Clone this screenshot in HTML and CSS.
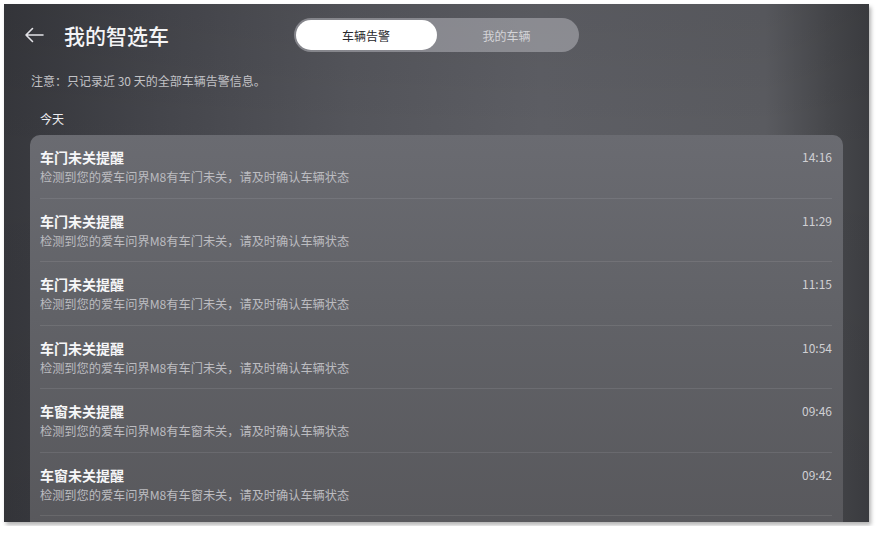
FILE: index.html
```html
<!DOCTYPE html>
<html lang="zh-CN">
<head>
    <meta charset="UTF-8">
    <meta name="viewport" content="width=device-width, initial-scale=1.0">
    <title>我的智选车</title>
    <link rel="stylesheet" href="styles.css">
</head>
<body>

<div class="screen">
    <div class="header">
        <div class="header-left">
            <svg class="back-icon" width="20" height="16" viewBox="0 0 20 16">
                <path d="M19 8H2M8.5 1.5L2 8l6.5 6.5" fill="none" stroke="#e2e2e6" stroke-width="1.6" stroke-linecap="round" stroke-linejoin="round"/>
            </svg>
            <h1 class="title">我的智选车</h1>
        </div>
        <div class="tabs">
            <div class="tab active">车辆告警</div>
            <div class="tab">我的车辆</div>
        </div>
        <div></div>
    </div>

    <p class="notice">注意：只记录近 30 天的全部车辆告警信息。</p>
    <p class="day">今天</p>

    <div class="card" id="alert-list">
        <!-- 告警列表由下方脚本生成 -->
    </div>
</div>

<script>
    const alerts = [
        { title: '车门未关提醒', part: '车门', time: '14:16' },
        { title: '车门未关提醒', part: '车门', time: '11:29' },
        { title: '车门未关提醒', part: '车门', time: '11:15' },
        { title: '车门未关提醒', part: '车门', time: '10:54' },
        { title: '车窗未关提醒', part: '车窗', time: '09:46' },
        { title: '车窗未关提醒', part: '车窗', time: '09:42' }
    ];

    const list = document.getElementById('alert-list');
    for (const item of alerts) {
        const row = document.createElement('div');
        row.className = 'alert-row';

        const text = document.createElement('div');
        text.className = 'alert-text';

        const title = document.createElement('div');
        title.className = 'alert-title';
        title.innerText = item.title;

        const desc = document.createElement('div');
        desc.className = 'alert-desc';
        desc.innerText = `检测到您的爱车问界M8有${item.part}未关，请及时确认车辆状态`;

        const time = document.createElement('div');
        time.className = 'alert-time';
        time.innerText = item.time;

        text.appendChild(title);
        text.appendChild(desc);
        row.appendChild(text);
        row.appendChild(time);
        list.appendChild(row);
    }
</script>

</body>
</html>
```

FILE: styles.css
```css
body {
    margin: 0;
    padding: 4px;
    background-color: #ffffff;
    font-family: "Noto Sans CJK SC", "Noto Sans", sans-serif;
}
.screen {
    width: 865px;
    height: 518px;
    overflow: hidden;
    background:
        linear-gradient(180deg, rgba(0, 0, 0, 0.06) 0%, rgba(0, 0, 0, 0) 30%, rgba(0, 0, 0, 0.05) 100%),
        linear-gradient(90deg, #36373c 0%, #45464c 18%, #55565c 40%, #5e5f65 62%, #5b5c61 88%, #48494d 95%, #3d3e42 100%);
    box-shadow: 2px 3px 4px rgba(0, 0, 0, 0.3);
}
.header {
    display: grid;
    grid-template-columns: 1fr auto 1fr;
    align-items: center;
    padding-top: 14px;
    height: 34px;
}
.header-left {
    display: flex;
    align-items: center;
    padding-left: 20px;
}
.back-icon {
    display: block;
}
.title {
    margin: 0 0 0 20px;
    font-size: 21px;
    font-weight: 500;
    color: #f4f4f6;
    line-height: 30px;
}
.tabs {
    display: flex;
    width: 285px;
    height: 34px;
    padding: 2px;
    box-sizing: border-box;
    border-radius: 17px;
    background-color: rgba(200, 200, 206, 0.45);
    margin-left: -1px;
}
.tab {
    flex: 1;
    display: flex;
    align-items: center;
    justify-content: center;
    border-radius: 15px;
    font-size: 12px;
    color: #d4d4d8;
}
.tab.active {
    flex: 0 0 141px;
    background-color: #ffffff;
    color: #26262a;
}
.notice {
    margin: 20px 0 0 27px;
    font-size: 12px;
    line-height: 18px;
    color: #c2c2c6;
}
.day {
    margin: 20px 0 0 36px;
    font-size: 12px;
    line-height: 18px;
    color: #ececef;
}
.card {
    margin: 7px 26px 0 26px;
    padding-bottom: 20px;
    border-radius: 10px;
    background: linear-gradient(180deg, #6a6b71 0%, #616267 45%, #58585c 100%);
}
.alert-row {
    display: flex;
    justify-content: space-between;
    margin: 0 11px 0 10px;
    padding: 12px 0 10.5px 0;
    border-bottom: 1px solid rgba(255, 255, 255, 0.09);
}
.alert-title {
    font-size: 14px;
    font-weight: 700;
    line-height: 20px;
    color: #f6f6f8;
}
.alert-desc {
    font-size: 12.2px;
    line-height: 20px;
    color: #bcbcc0;
}
.alert-time {
    font-size: 12px;
    line-height: 20px;
    color: #cfcfd3;
}
```
